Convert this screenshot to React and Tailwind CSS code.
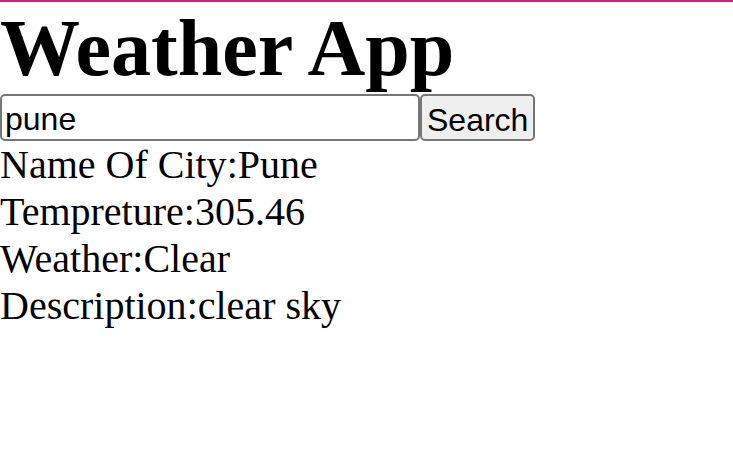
export default function App() {
  const rows = [
    ["Name Of City", "Pune"],
    ["Tempreture", "305.46"],
    ["Weather", "Clear"],
    ["Description", "clear sky"],
  ];

  return (
    <div className="min-h-[476px] bg-white border-t-2 border-[#d01a7e] text-black font-['Liberation_Serif',serif]">
      <h1 className="text-[80px] font-bold leading-[92px]">Weather App</h1>
      <div className="flex items-stretch">
        <input
          type="text"
          defaultValue="pune"
          className="w-[420px] h-[47px] px-[3px] pt-[3px] border-2 border-[#767676] rounded-[5px] text-[32px] font-['Liberation_Sans',Arial,sans-serif] text-black outline-none"
        />
        <button className="h-[47px] px-[5px] bg-[#efefef] border-2 border-[#767676] rounded-[5px] text-[32px] font-['Liberation_Sans',Arial,sans-serif] text-black">
          Search
        </button>
      </div>
      <div className="text-[40px] leading-[47px]">
        {rows.map(([label, value]) => (
          <p key={label}>
            {label}:{value}
          </p>
        ))}
      </div>
    </div>
  );
}
